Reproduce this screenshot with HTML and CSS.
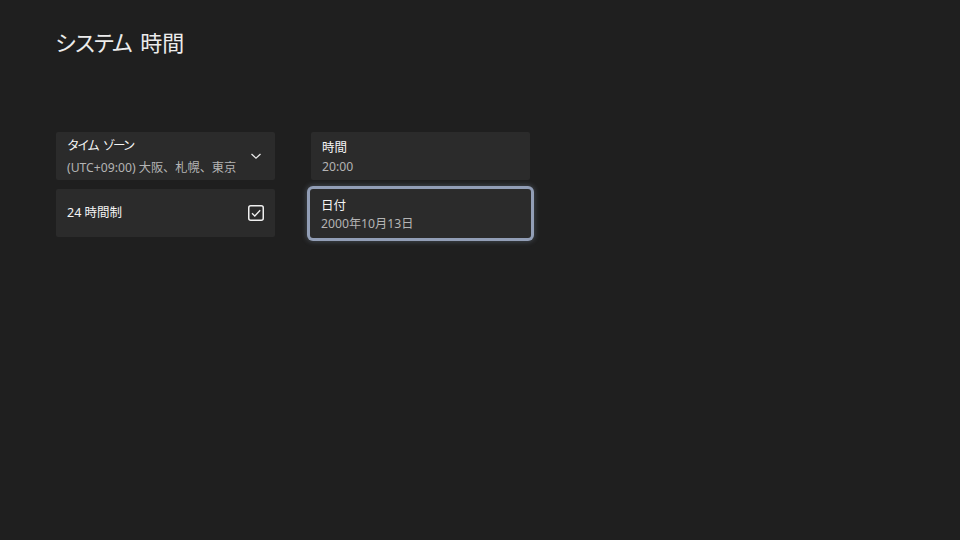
FILE: index.html
```html
<!DOCTYPE html>
<html lang="ja">
<head>
<meta charset="utf-8">
<title>システム 時間</title>
<link rel="stylesheet" href="styles.css">
</head>
<body>
<div class="page">
  <h1 class="title"><span class="kana">システム</span><span class="title-gap"></span>時間</h1>
  <div class="columns">
    <div class="column">
      <div class="card dropdown">
        <div class="card-text">
          <div class="label"><span class="kana-small">タイム</span><span class="word-gap"></span><span class="kana-small">ゾーン</span></div>
          <div class="value">(UTC+09:00) 大阪、札幌、東京</div>
        </div>
        <svg class="chevron" width="12" height="8" viewBox="0 0 12 8"><path d="M1.5 2 L6 6.2 L10.5 2" fill="none" stroke="#e8e8e8" stroke-width="1.3"/></svg>
      </div>
      <div class="card">
        <div class="card-text">
          <div class="label">24 時間制</div>
        </div>
        <svg class="checkbox" width="16" height="16" viewBox="0 0 16 16"><rect x="0.75" y="0.75" width="14.5" height="14.5" rx="2" fill="none" stroke="#f0f0f0" stroke-width="1.5"/><path d="M4 8.2 L6.8 11 L12.2 5.2" fill="none" stroke="#f0f0f0" stroke-width="1.3"/></svg>
      </div>
    </div>
    <div class="column">
      <div class="card">
        <div class="card-text shifted">
          <div class="label">時間</div>
          <div class="value">20:00</div>
        </div>
      </div>
      <div class="card focused">
        <div class="card-text shifted">
          <div class="label">日付</div>
          <div class="value">2000年10月13日</div>
        </div>
      </div>
    </div>
  </div>
</div>
</body>
</html>
```
FILE: styles.css
```css
html, body {
  margin: 0;
  padding: 0;
  background: #1f1f1f;
}
body {
  width: 960px;
  height: 540px;
  overflow: hidden;
  font-family: "Noto Sans", "Noto Sans CJK JP", sans-serif;
  color: #f2f2f2;
}
.page {
  padding: 27px 0 0 55px;
}
.title {
  margin: 0;
  font-size: 22px;
  font-weight: 400;
  line-height: 30px;
  color: #ececec;
  display: flex;
  align-items: center;
}
.kana {
  letter-spacing: -3px;
}
.title-gap {
  display: inline-block;
  width: 10px;
}
.columns {
  display: flex;
  gap: 36px;
  margin-top: 75px;
  margin-left: 1px;
}
.column {
  display: flex;
  flex-direction: column;
  gap: 9px;
  width: 219px;
}
.card {
  height: 48px;
  background: #2b2b2b;
  border-radius: 2px;
  display: flex;
  align-items: center;
  justify-content: space-between;
  padding: 0 11px;
  box-sizing: border-box;
}
.card-text {
  display: flex;
  flex-direction: column;
  gap: 1px;
}
.dropdown .card-text {
  gap: 4px;
  padding-top: 2px;
}
.shifted {
  padding-top: 3px;
  gap: 0.5px;
}
.label {
  font-size: 12.5px;
  line-height: 18px;
  color: #f4f4f4;
}
.kana-small {
  letter-spacing: -2.2px;
}
.word-gap {
  display: inline-block;
  width: 5px;
}
.value {
  font-size: 12.2px;
  line-height: 18px;
  color: #b4b4b4;
}
.chevron {
  margin-right: 2px;
}
.focused {
  height: 49px;
  margin: 0 -1px;
  padding: 0 11px;
  box-shadow: 0 0 0 3px #929eb6, 0 0 5px 4px rgba(140, 155, 180, 0.3);
  border-radius: 3px;
}
```
